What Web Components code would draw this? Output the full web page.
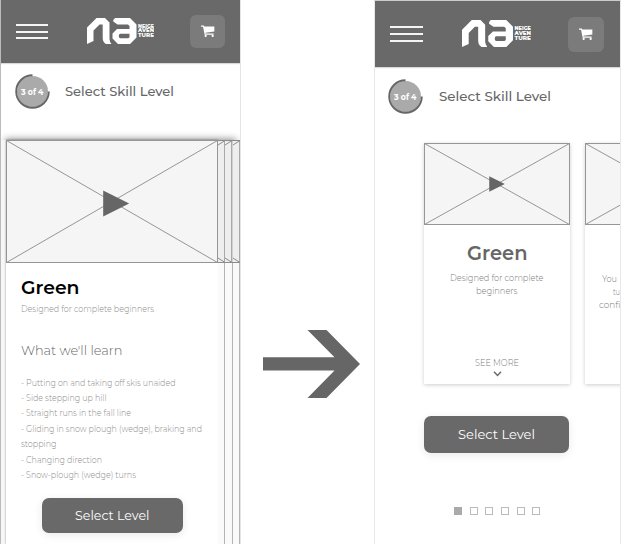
<!DOCTYPE html>
<html lang="en">
<head>
<meta charset="utf-8">
<title>Select Skill Level</title>
<style>
html,body{margin:0;height:544px;overflow:hidden;background:#fff}
body{font-family:Montserrat,Inter,"Open Sans",sans-serif;color:#666}
</style>
</head>
<body>
<flow-board></flow-board>
<script>
const define = (name, html, after) => customElements.define(name, class extends HTMLElement {
  connectedCallback() {
    if (this.shadowRoot) return;
    const root = this.attachShadow({ mode: "open" });
    root.innerHTML = typeof html === "function" ? html(this) : html;
    if (after) after(this, root);
  }
});

// A single line of type, stretched to a given width.
define("ui-text", el => `<style>
:host{display:block;white-space:nowrap;width:${el.getAttribute("w")}px;height:${el.getAttribute("lh") || 16}px;line-height:${el.getAttribute("lh") || 16}px;font-size:${el.getAttribute("size")}px;font-weight:${el.getAttribute("weight") || 400}}
span{display:inline-block;transform-origin:0 50%}
</style><span><slot></slot></span>`, (el, root) => {
  const s = root.querySelector("span");
  const natural = s.getBoundingClientRect().width;
  if (natural) s.style.transform = `scaleX(${el.getAttribute("w") / natural})`;
});

define("brand-logo", `<style>:host{display:block}svg{display:block;width:100%;height:100%}text{font:800 5px Montserrat,Inter,sans-serif}</style>
<svg viewBox="0 0 67 26" preserveAspectRatio="none" fill="#fff">
<path d="M0 26V9.500L9.500 0H18L22.500 4.500V21Q22.500 23.500 24.500 26H19Q15.700 24 15.700 20V6.500H12.500L6.500 12.500V23Z"/>
<path fill-rule="evenodd" d="M28 0H43L49.500 6.500V19.500L43 26H31L25.500 20.500V15.500L30 11H42.500V8L41 6.500H30.500L26.300 3.500V2ZM33 15.700L31.900 16.700V19.300L33 20.300H41.300L42.500 19.300V15.700Z"/>
<text x="51" y="9.500" textLength="16" lengthAdjust="spacingAndGlyphs">NEIGE</text>
<text x="51" y="14.200" textLength="16" lengthAdjust="spacingAndGlyphs">AVEN</text>
<text x="51" y="18.900" textLength="16" lengthAdjust="spacingAndGlyphs">TURE</text>
</svg>`);

define("menu-icon", `<style>:host{display:flex;flex-direction:column;justify-content:space-between}i{height:2px;background:#f4f4f4}</style><i></i><i></i><i></i>`);

define("cart-button", `<style>:host{display:flex;align-items:center;justify-content:center;background:#7b7b7b;border-radius:6px}svg{width:14px;height:12.500px}</style>
<svg viewBox="0 0 15 13"><path d="M0 .3H3L3.500 1.500H14.300V6.800L4.800 8L5 9H13.500V10.200H3.900L2.200 1.700H0Z" fill="#fff"/><circle cx="5" cy="11.500" r="1.200" fill="#fff"/><circle cx="12.500" cy="11.500" r="1.200" fill="#fff"/></svg>`);

define("app-header", `<style>
:host{display:flex;box-sizing:border-box;background:#696969;align-items:flex-start;box-shadow:0 1px 1px rgba(0,0,0,.15)}
menu-icon{width:var(--mw);height:var(--mh);margin-top:var(--mt);margin-left:var(--ml)}
brand-logo{width:var(--lw);height:var(--lh);margin-top:var(--lt);margin-left:var(--ll)}
cart-button{width:var(--cw);height:var(--ch);margin-top:var(--ct);margin-left:var(--cl)}
</style><menu-icon></menu-icon><brand-logo></brand-logo><cart-button></cart-button>`);

define("step-ring", `<style>:host{display:grid;width:35px;height:35px}svg,ui-text{grid-area:1/1}ui-text{place-self:center;color:#fff}</style>
<svg viewBox="0 0 35 35"><circle cx="17.500" cy="17.500" r="15.500" fill="#aaa"/><path d="M17.500 1.200A16.300 16.300 0 1 0 33.800 17.500" fill="none" stroke="#666" stroke-width="1.900"/></svg>
<ui-text size="8" weight="700" w="22.500" lh="12">3 of 4</ui-text>`);

define("video-box", el => { const w = +el.getAttribute("w"), h = +el.getAttribute("h"), p = +el.getAttribute("play"); return `<style>:host{display:block;width:${w}px;height:${h}px}svg{display:block}</style>
<svg width="${w}" height="${h}"><g stroke="#969696" fill="#f5f5f5"><rect x=".5" y=".5" width="${w-1}" height="${h-1}"/><path d="M.5 .5L${w-.5} ${h-.5}M.5 ${h-.5}L${w-.5} .5"/></g>
<path d="M${w/2-p*(p>20?.34:.5)} ${h/2-p/2+(p>20?2:0)}l${p} ${p/2}l${-p} ${p/2}z" fill="#666"/></svg>`; });

define("primary-button", `<style>:host{display:flex;align-items:center;justify-content:center;box-sizing:border-box;background:#696969;border-radius:7px;color:#fff;box-shadow:0 2px 9px rgba(0,0,0,.09)}</style><slot></slot>`);

define("skill-card", `<style>:host{display:flex;flex-direction:column;align-items:center;flex:none;width:146px;height:241px;background:#fff;box-shadow:0 1px 4px rgba(0,0,0,.2)}</style><slot></slot>`);

// Edges of the cards waiting behind the front one.
define("card-stack", `<style>:host{display:flex;height:404px}
i{display:block;width:7.330px;box-sizing:border-box;border-right:1px solid #b4b4b4;background:#fafafa}
svg{display:block}</style>
${`<i><svg width="7.330" height="123"><rect width="8" height="123" fill="#eee"/><path d="M0 .5H8M0 122.500H8M0 5L7 .5M0 118L7 122.500M6.800 0V123" fill="none" stroke="#8c8c8c"/></svg></i>`.repeat(3)}`);

define("page-dots", `<style>:host{display:flex;gap:7.700px}i{box-sizing:border-box;width:8px;height:8px;border:1px solid #bbb}i:first-of-type{background:#aaa;border-color:#aaa}</style>${"<i></i>".repeat(6)}`);

define("phone-detail", `<style>
:host{display:block;box-sizing:border-box;width:241px;height:544px;border-left:1px solid #bbb;border-right:1px solid #e4e4e4;overflow:hidden}
app-header{height:63px;--mw:32px;--mh:15px;--mt:24px;--ml:15px;--lw:67px;--lh:26px;--lt:18px;--ll:39px;--cw:35px;--ch:33px;--ct:15px;--cl:36px}
.step{display:flex;height:77px;padding:11px 0 0 13.500px;box-sizing:border-box}.step ui-text{margin:8.500px 0 0 15px}
.row{display:flex;padding-left:5px;background:#f7f7f7;box-shadow:0 -5px 7px -4px rgba(0,0,0,.45)}
.card{width:212px;height:404px;background:#fff;box-shadow:0 0 2px rgba(0,0,0,.4)}
.body{padding:12.500px 0 0 15px}
ul{list-style:none;margin:16.700px 0 0;padding:0}
.light{color:#8c8c8c}
primary-button{width:141px;height:35.500px;margin:15.500px 0 0 20.500px}
</style>
<app-header></app-header>
<div class="step"><step-ring></step-ring><ui-text size="13" weight="500" w="109">Select Skill Level</ui-text></div>
<div class="row"><div class="card"><video-box w="212" h="123" play="26"></video-box><div class="body">
<ui-text style="color:#000" size="18.300" weight="600" w="58.500" lh="24">Green</ui-text>
<ui-text class="light" style="margin-top:3px" size="9" weight="300" w="133" lh="12">Designed for complete beginners</ui-text>
<ui-text style="margin-top:27.500px" size="13.300" weight="300" w="101.500">What we'll learn</ui-text>
<ul class="light">
<li><ui-text size="9" weight="300" lh="15.400" w="154.500">- Putting on and taking off skis unaided</ui-text></li>
<li><ui-text size="9" weight="300" lh="15.400" w="85.500">- Side stepping up hill</ui-text></li>
<li><ui-text size="9" weight="300" lh="15.400" w="110">- Straight runs in the fall line</ui-text></li>
<li><ui-text size="9" weight="300" lh="15.400" w="181">- Gliding in snow plough (wedge), braking and</ui-text><ui-text size="9" weight="300" lh="15.400" w="35.500">stopping</ui-text></li>
<li><ui-text size="9" weight="300" lh="15.400" w="81">- Changing direction</ui-text></li>
<li><ui-text size="9" weight="300" lh="15.400" w="115">- Snow-plough (wedge) turns</ui-text></li>
</ul>
<primary-button><ui-text style="margin-bottom:1px" size="13" w="74.500">Select Level</ui-text></primary-button>
</div></div><card-stack></card-stack></div>`);

define("phone-carousel", `<style>
:host{display:block;box-sizing:border-box;width:247px;height:544px;border:1px solid #e8e8e8;border-top-color:#ccc;border-bottom:0;overflow:hidden}
app-header{height:66px;--mw:33px;--mh:15.500px;--mt:25px;--ml:15px;--lw:69px;--lh:27px;--lt:19px;--ll:39px;--cw:36px;--ch:35px;--ct:16px;--cl:37px}
.step{display:flex;height:76px;padding:12px 0 0 13px;box-sizing:border-box}.step ui-text{margin:8.500px 0 0 16px}
.cards{display:flex;gap:15px;padding-left:49px}
.copy{color:#7c7c7c}
svg{display:block}
primary-button{width:145px;height:36.500px;margin:32px 0 0 49.400px}
page-dots{margin:54.500px 0 0 79px}
</style>
<app-header></app-header>
<div class="step"><step-ring></step-ring><ui-text size="13" weight="500" w="112">Select Skill Level</ui-text></div>
<div class="cards">
<skill-card><video-box w="146" h="82" play="15.500"></video-box>
<ui-text style="margin-top:16px" size="19.500" weight="600" w="60.500" lh="24">Green</ui-text>
<ui-text class="copy" style="margin-top:6px" size="9" weight="300" w="93.500" lh="13">Designed for complete</ui-text>
<ui-text class="copy" size="9" weight="300" w="41.500" lh="13">beginners</ui-text>
<ui-text class="copy" style="margin-top:59px" size="9" weight="300" w="44" lh="13">SEE MORE</ui-text>
<svg style="margin-top:1.500px" width="9" height="6"><path d="M1 .8L4.500 4.500L8 .8" fill="none" stroke="#666" stroke-width="1.400"/></svg>
</skill-card>
<skill-card style="align-items:flex-start"><video-box w="146" h="82" play="15.500"></video-box>
<ui-text class="copy" style="margin:46.500px 0 0 17px" size="9" weight="300" w="15" lh="13">You</ui-text>
<ui-text class="copy" style="margin-left:28px" size="9" weight="300" w="7" lh="13">tu</ui-text>
<ui-text class="copy" style="margin-left:13.500px" size="9" weight="300" w="21.500" lh="13">confi</ui-text>
</skill-card></div>
<primary-button><ui-text style="margin-bottom:1px" size="13.300" w="77">Select Level</ui-text></primary-button>
<page-dots></page-dots>`);

define("flow-arrow", `<style>:host{display:block;width:97px;height:68px}svg{display:block}</style>
<svg width="97" height="68"><path d="M44.500 0H63.500L97 34L63.500 68H44.500L71.500 40.600H0V27.200H71.500Z" fill="#666"/></svg>`);

define("flow-board", `<style>:host{display:flex;height:544px;width:621px}flow-arrow{margin:330px 14px 0 22px}</style>
<phone-detail></phone-detail><flow-arrow></flow-arrow><phone-carousel></phone-carousel>`);
</script>
</body>
</html>
